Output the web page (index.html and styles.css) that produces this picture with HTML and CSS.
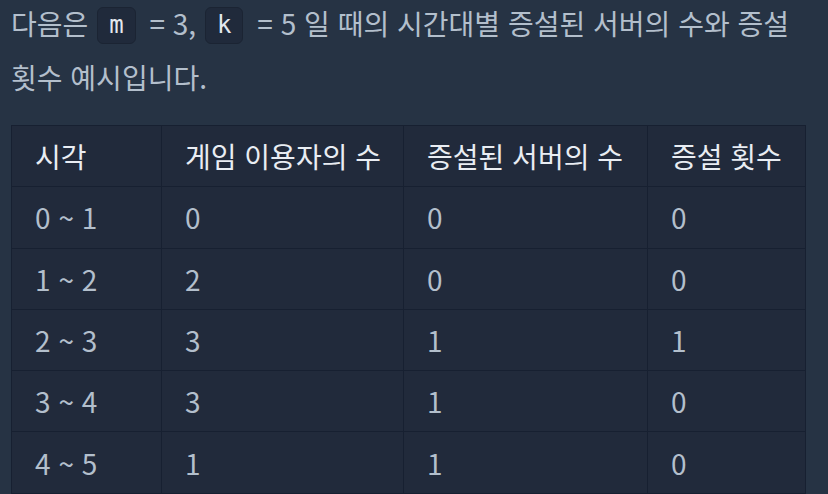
FILE: index.html
```html
<!DOCTYPE html>
<html lang="ko">
<head>
<meta charset="utf-8">
<link rel="stylesheet" href="styles.css">
</head>
<body>
<div class="page">
  <p class="desc">다음은 <code>m</code> = 3, <code>k</code> = 5 일 때의 시간대별 증설된 서버의 수와 증설 횟수 예시입니다.</p>
  <table class="grid">
    <colgroup>
      <col class="c1"><col class="c2"><col class="c3"><col class="c4">
    </colgroup>
    <thead>
      <tr><th>시각</th><th>게임 이용자의 수</th><th>증설된 서버의 수</th><th>증설 횟수</th></tr>
    </thead>
    <tbody>
      <tr><td>0 ~ 1</td><td>0</td><td>0</td><td>0</td></tr>
      <tr><td>1 ~ 2</td><td>2</td><td>0</td><td>0</td></tr>
      <tr><td>2 ~ 3</td><td>3</td><td>1</td><td>1</td></tr>
      <tr><td>3 ~ 4</td><td>3</td><td>1</td><td>0</td></tr>
      <tr><td>4 ~ 5</td><td>1</td><td>1</td><td>0</td></tr>
    </tbody>
  </table>
</div>
</body>
</html>
```
FILE: styles.css
```css
html, body {
  margin: 0;
  padding: 0;
  background: #263344;
  height: 100%;
  overflow: hidden;
}
.page {
  padding: 0 11px;
  font-family: "Noto Sans CJK KR", "Noto Sans", sans-serif;
  font-size: 28px;
  color: #b3bfcc;
}
.desc {
  margin: -4px 0 0;
  line-height: 54px;
  width: 806px;
}
.desc code {
  display: inline-block;
  font-family: "DejaVu Sans Mono", "Liberation Mono", monospace;
  font-size: 24px;
  line-height: 35px;
  padding: 0 11px;
  margin: 0 6px 0 1px;
  background: #202a3b;
  border: 1px solid #1b2433;
  border-radius: 6px;
  color: #e3e8ee;
  vertical-align: 2px;
}
.grid {
  margin-top: 21px;
  border-collapse: collapse;
  background: #212a3b;
  width: 794px;
  table-layout: fixed;
}
.c1 { width: 150px; }
.c2 { width: 242px; }
.c3 { width: 244px; }
.c4 { width: 158px; }
.grid th, .grid td {
  border: 1px solid #172031;
  text-align: left;
  padding: 0 23px;
  height: 60.3px;
  font-weight: 400;
  white-space: nowrap;
}
.grid th {
  color: #e9edf3;
}
.grid td {
  color: #b3bfcc;
}
```
